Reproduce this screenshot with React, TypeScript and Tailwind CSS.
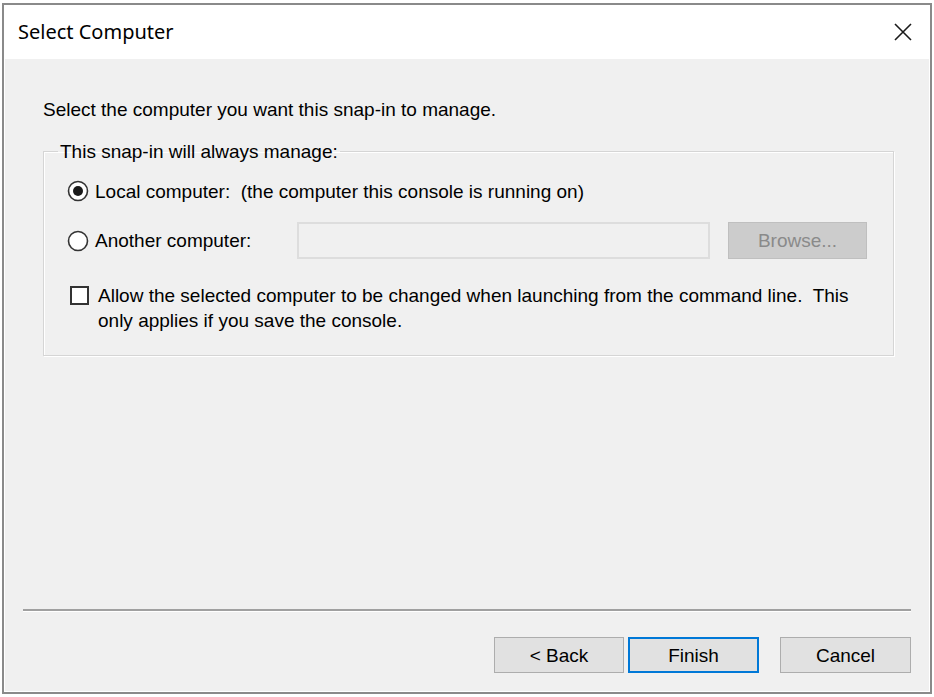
import React from "react";

const body = { fontFamily: '"Liberation Sans", Arial, sans-serif' };
const title = { fontFamily: '"Noto Sans", "Open Sans", sans-serif' };

function Radio({ checked }: { checked?: boolean }) {
  return (
    <svg width="22" height="22" viewBox="0 0 22 22" className="shrink-0">
      <circle cx="11" cy="11" r="9.5" fill="#ffffff" stroke="#333333" strokeWidth="1.6" />
      {checked && <circle cx="11" cy="11" r="5" fill="#1a1a1a" />}
    </svg>
  );
}

export default function App() {
  return (
    <div className="w-[934px] h-[697px] bg-white pt-[3px] pl-[2px]" style={body}>
      <div className="w-[930px] h-[691px] border-2 border-[#8a8a8a] flex flex-col">
        <div className="h-[53px] bg-white flex items-center justify-between pl-[14px] pr-[17px] shrink-0">
          <span className="text-[20px] text-black" style={title}>Select Computer</span>
          <svg width="20" height="20" viewBox="0 0 20 20">
            <path d="M2 2 L18 18 M18 2 L2 18" stroke="#1a1a1a" strokeWidth="1.6" />
          </svg>
        </div>
        <div className="flex-1 bg-[#f0f0f0] border border-white flex flex-col text-[19px] text-black leading-[21px]">
          <div className="pl-[38px] pr-[35px] pt-[40px] flex-1">
            <p>Select the computer you want this snap-in to manage.</p>
            <fieldset className="mt-[21px] h-[215px] border border-[#d5d5d5] shadow-[inset_1px_1px_0_#ffffff,1px_1px_0_#ffffff] px-0">
              <legend className="ml-[14px] px-[2px] -mt-[1px]">This snap-in will always manage:</legend>
              <div className="pl-[23px] pr-[24px]">
                <div className="flex items-center gap-[6px] mt-[18px]">
                  <Radio checked />
                  <span>Local computer:&nbsp; (the computer this console is running on)</span>
                </div>
                <div className="flex items-center mt-[20px]">
                  <div className="flex items-center gap-[6px] w-[230px]">
                    <Radio />
                    <span>Another computer:</span>
                  </div>
                  <div className="w-[413px] h-[37px] border-2 border-[#dddddd] bg-[#f0f0f0]" />
                  <div className="ml-[18px] w-[139px] h-[37px] border border-[#bfbfbf] bg-[#cccccc] flex items-center justify-center text-[#8a8a8a]">
                    Browse...
                  </div>
                </div>
                <div className="flex items-start gap-[9px] mt-[26px] ml-[3px]">
                  <div className="w-[19px] h-[19px] border-2 border-[#333333] bg-white mt-[1px] shrink-0" />
                  <p className="leading-[25px] -mt-[2px]">
                    Allow the selected computer to be changed when launching from the command line.&nbsp; This
                    <br />
                    only applies if you save the console.
                  </p>
                </div>
              </div>
            </fieldset>
          </div>
          <div className="mx-[18px] h-[2px] bg-[#a0a0a0] border-b border-white box-content" />
          <div className="flex justify-end items-center pr-[18px] pt-[25px] pb-[18px] gap-[4px]">
            <button className="w-[130px] h-[36px] border border-[#adadad] bg-[#e1e1e1] text-[19px]">&lt; Back</button>
            <button className="w-[131px] h-[36px] border-2 border-[#0078d7] bg-[#e1e1e1] text-[19px]">Finish</button>
            <button className="ml-[17px] w-[131px] h-[36px] border border-[#adadad] bg-[#e1e1e1] text-[19px]">Cancel</button>
          </div>
        </div>
      </div>
    </div>
  );
}
